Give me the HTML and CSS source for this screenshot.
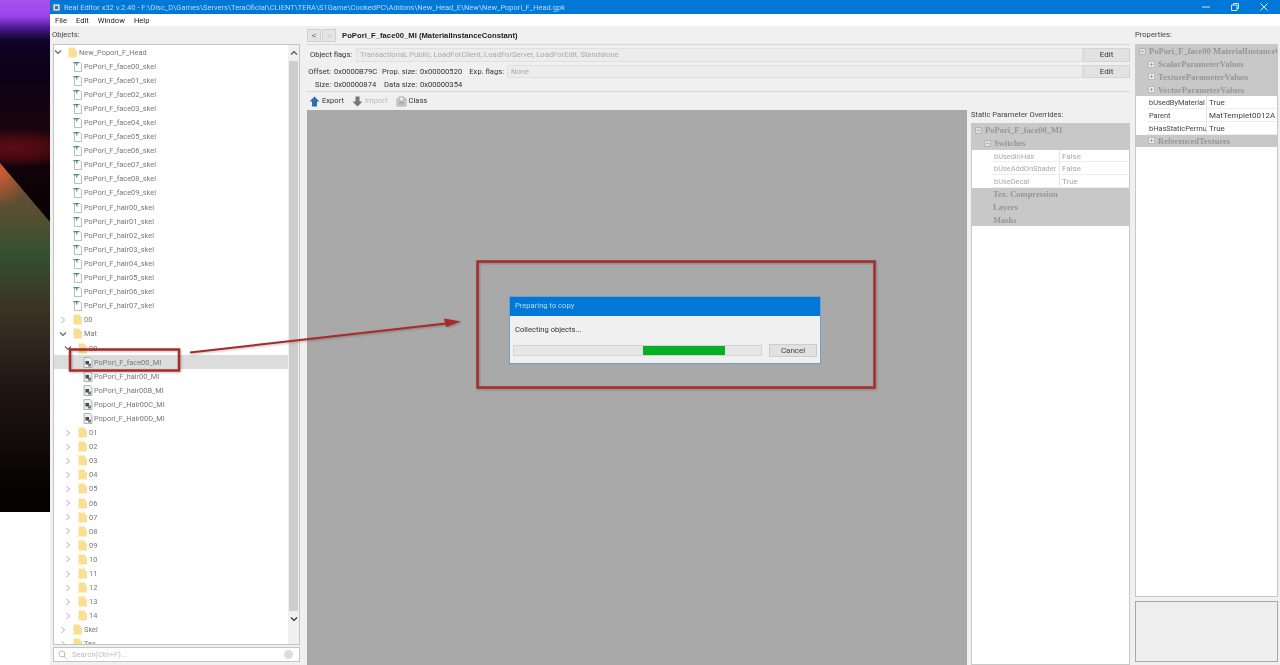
FILE: index.html
```html
<!DOCTYPE html>
<html lang="en">
<head>
    <meta charset="UTF-8">
    <title>Real Editor x32 v.2.40</title>
    <link rel="stylesheet" href="styles.css">
</head>
<body>
    <svg class="defs" aria-hidden="true">
        <symbol id="folder" viewBox="0 0 10 11">
            <path d="M0.500 0.500h6l1 1.500v8.500h-7z" fill="#f9e08f"/>
            <path d="M6.500 3h2.500v7.500h-2z" fill="#f4dfa6"/>
        </symbol>
        <symbol id="skel" viewBox="0 0 10 11">
            <path d="M1.500 1.500h5.500l1.500 1.500v7.500h-7z" fill="#fff" stroke="#9aa5a0" stroke-width="0.700"/>
            <path d="M0.300 1.200h5.500v1h-1.500v2.300h-1v-2.300h-3z" fill="#2c7d5b"/>
        </symbol>
        <symbol id="mat" viewBox="0 0 10 11">
            <path d="M1 0.500h6l2 2v8h-8z" fill="#efefef" stroke="#a0a0a0" stroke-width="0.800"/>
            <path d="M2.500 4h3.500v3.500h-3.500z" fill="#4a4a4a"/>
            <path d="M5 6.500h3v3h-3z" fill="#5f8a70"/>
        </symbol>
        <symbol id="open" viewBox="0 0 8 8">
            <path d="M1 2.500l3 3 3-3" fill="none" stroke="#666" stroke-width="1.200"/>
        </symbol>
        <symbol id="closed" viewBox="0 0 8 8">
            <path d="M2.500 1l3 3-3 3" fill="none" stroke="#aaa" stroke-width="1"/>
        </symbol>
        <symbol id="plus" viewBox="0 0 7 7">
            <path d="M0.500 0.500h6v6h-6z" fill="#eee" stroke="#aaa" stroke-width="0.700"/>
            <path d="M2 3.500h3M3.500 2v3" stroke="#888" stroke-width="0.700"/>
        </symbol>
        <symbol id="minus" viewBox="0 0 7 7">
            <path d="M0.500 0.500h6v6h-6z" fill="#ddd" stroke="#aaa" stroke-width="0.700"/>
            <path d="M2 3.500h3" stroke="#999" stroke-width="0.700"/>
        </symbol>
    </svg>

    <div class="wallpaper"></div>

    <div class="window">
        <div class="titlebar">
            <svg class="app-icon" viewBox="0 0 9 9"><path d="M1 1h7v7h-7z" fill="#cfe4f2" stroke="#5f7f94"/><path d="M3 3h3v3h-3z" fill="#4a6a80"/></svg>
            <span class="title-text">Real Editor x32 v.2.40 - F:\Disc_D\Games\Servers\TeraOficial\CLIENT\TERA\S1Game\CookedPC\Addons\New_Head_E\New\New_Popori_F_Head.gpk</span>
            <div class="win-controls">
                <svg viewBox="0 0 10 10"><path d="M1 5h8" stroke="#cfe6f7"/></svg>
                <svg viewBox="0 0 10 10"><path d="M1.500 3h5.500v5.500h-5.500zM3.500 3v-1.500h5v5h-1.500" fill="none" stroke="#cfe6f7"/></svg>
                <svg viewBox="0 0 10 10"><path d="M1.500 1.500l7 7M8.500 1.500l-7 7" stroke="#e4f1fb"/></svg>
            </div>
        </div>
        <div class="menubar">
            <span>File</span><span>Edit</span><span>Window</span><span>Help</span>
        </div>

        <div class="panes">
            <div class="objects-pane">
                <div class="pane-label">Objects:</div>
                <div class="tree-box">
                    <div class="tree">
                        <div class="row lvl0"><svg class="chev"><use href="#open"/></svg><svg class="ico"><use href="#folder"/></svg><span>New_Popori_F_Head</span></div>
                        <div class="row lvl1"><i class="chev"></i><svg class="ico"><use href="#skel"/></svg><span>PoPori_F_face00_skel</span></div>
                        <div class="row lvl1"><i class="chev"></i><svg class="ico"><use href="#skel"/></svg><span>PoPori_F_face01_skel</span></div>
                        <div class="row lvl1"><i class="chev"></i><svg class="ico"><use href="#skel"/></svg><span>PoPori_F_face02_skel</span></div>
                        <div class="row lvl1"><i class="chev"></i><svg class="ico"><use href="#skel"/></svg><span>PoPori_F_face03_skel</span></div>
                        <div class="row lvl1"><i class="chev"></i><svg class="ico"><use href="#skel"/></svg><span>PoPori_F_face04_skel</span></div>
                        <div class="row lvl1"><i class="chev"></i><svg class="ico"><use href="#skel"/></svg><span>PoPori_F_face05_skel</span></div>
                        <div class="row lvl1"><i class="chev"></i><svg class="ico"><use href="#skel"/></svg><span>PoPori_F_face06_skel</span></div>
                        <div class="row lvl1"><i class="chev"></i><svg class="ico"><use href="#skel"/></svg><span>PoPori_F_face07_skel</span></div>
                        <div class="row lvl1"><i class="chev"></i><svg class="ico"><use href="#skel"/></svg><span>PoPori_F_face08_skel</span></div>
                        <div class="row lvl1"><i class="chev"></i><svg class="ico"><use href="#skel"/></svg><span>PoPori_F_face09_skel</span></div>
                        <div class="row lvl1"><i class="chev"></i><svg class="ico"><use href="#skel"/></svg><span>PoPori_F_hair00_skel</span></div>
                        <div class="row lvl1"><i class="chev"></i><svg class="ico"><use href="#skel"/></svg><span>PoPori_F_hair01_skel</span></div>
                        <div class="row lvl1"><i class="chev"></i><svg class="ico"><use href="#skel"/></svg><span>PoPori_F_hair02_skel</span></div>
                        <div class="row lvl1"><i class="chev"></i><svg class="ico"><use href="#skel"/></svg><span>PoPori_F_hair03_skel</span></div>
                        <div class="row lvl1"><i class="chev"></i><svg class="ico"><use href="#skel"/></svg><span>PoPori_F_hair04_skel</span></div>
                        <div class="row lvl1"><i class="chev"></i><svg class="ico"><use href="#skel"/></svg><span>PoPori_F_hair05_skel</span></div>
                        <div class="row lvl1"><i class="chev"></i><svg class="ico"><use href="#skel"/></svg><span>PoPori_F_hair06_skel</span></div>
                        <div class="row lvl1"><i class="chev"></i><svg class="ico"><use href="#skel"/></svg><span>PoPori_F_hair07_skel</span></div>
                        <div class="row lvl1"><svg class="chev"><use href="#closed"/></svg><svg class="ico"><use href="#folder"/></svg><span>00</span></div>
                        <div class="row lvl1"><svg class="chev"><use href="#open"/></svg><svg class="ico"><use href="#folder"/></svg><span>Mat</span></div>
                        <div class="row lvl2"><svg class="chev"><use href="#open"/></svg><svg class="ico"><use href="#folder"/></svg><span>00</span></div>
                        <div class="row lvl3 selected"><i class="chev"></i><svg class="ico"><use href="#mat"/></svg><span>PoPori_F_face00_MI</span></div>
                        <div class="row lvl3"><i class="chev"></i><svg class="ico"><use href="#mat"/></svg><span>PoPori_F_hair00_MI</span></div>
                        <div class="row lvl3"><i class="chev"></i><svg class="ico"><use href="#mat"/></svg><span>PoPori_F_hair00B_MI</span></div>
                        <div class="row lvl3"><i class="chev"></i><svg class="ico"><use href="#mat"/></svg><span>Popori_F_Hair00C_MI</span></div>
                        <div class="row lvl3"><i class="chev"></i><svg class="ico"><use href="#mat"/></svg><span>Popori_F_Hair00D_MI</span></div>
                        <div class="row lvl2"><svg class="chev"><use href="#closed"/></svg><svg class="ico"><use href="#folder"/></svg><span>01</span></div>
                        <div class="row lvl2"><svg class="chev"><use href="#closed"/></svg><svg class="ico"><use href="#folder"/></svg><span>02</span></div>
                        <div class="row lvl2"><svg class="chev"><use href="#closed"/></svg><svg class="ico"><use href="#folder"/></svg><span>03</span></div>
                        <div class="row lvl2"><svg class="chev"><use href="#closed"/></svg><svg class="ico"><use href="#folder"/></svg><span>04</span></div>
                        <div class="row lvl2"><svg class="chev"><use href="#closed"/></svg><svg class="ico"><use href="#folder"/></svg><span>05</span></div>
                        <div class="row lvl2"><svg class="chev"><use href="#closed"/></svg><svg class="ico"><use href="#folder"/></svg><span>06</span></div>
                        <div class="row lvl2"><svg class="chev"><use href="#closed"/></svg><svg class="ico"><use href="#folder"/></svg><span>07</span></div>
                        <div class="row lvl2"><svg class="chev"><use href="#closed"/></svg><svg class="ico"><use href="#folder"/></svg><span>08</span></div>
                        <div class="row lvl2"><svg class="chev"><use href="#closed"/></svg><svg class="ico"><use href="#folder"/></svg><span>09</span></div>
                        <div class="row lvl2"><svg class="chev"><use href="#closed"/></svg><svg class="ico"><use href="#folder"/></svg><span>10</span></div>
                        <div class="row lvl2"><svg class="chev"><use href="#closed"/></svg><svg class="ico"><use href="#folder"/></svg><span>11</span></div>
                        <div class="row lvl2"><svg class="chev"><use href="#closed"/></svg><svg class="ico"><use href="#folder"/></svg><span>12</span></div>
                        <div class="row lvl2"><svg class="chev"><use href="#closed"/></svg><svg class="ico"><use href="#folder"/></svg><span>13</span></div>
                        <div class="row lvl2"><svg class="chev"><use href="#closed"/></svg><svg class="ico"><use href="#folder"/></svg><span>14</span></div>
                        <div class="row lvl1"><svg class="chev"><use href="#closed"/></svg><svg class="ico"><use href="#folder"/></svg><span>Skel</span></div>
                        <div class="row lvl1"><svg class="chev"><use href="#closed"/></svg><svg class="ico"><use href="#folder"/></svg><span>Tex</span></div>
                    </div>
                    <div class="scrollbar">
                        <svg class="scroll-arrow" viewBox="0 0 8 8"><path d="M1 5.500l3-3 3 3" fill="none" stroke="#555" stroke-width="1.200"/></svg>
                        <div class="scroll-thumb"></div>
                        <svg class="scroll-arrow" viewBox="0 0 8 8"><path d="M1 2.500l3 3 3-3" fill="none" stroke="#333" stroke-width="1.200"/></svg>
                    </div>
                </div>
                <div class="search">
                    <svg class="search-icon" viewBox="0 0 9 9"><circle cx="4" cy="4" r="3" fill="none" stroke="#bbb"/><path d="M6 6l2.500 2.500" stroke="#bbb"/></svg>
                    <span>Search(Ctrl+F)...</span>
                    <i class="search-clear"></i>
                </div>
            </div>

            <div class="center-pane">
                <div class="nav">
                    <button class="nav-btn">&lt;</button>
                    <button class="nav-btn off">&gt;</button>
                    <span class="object-name">PoPori_F_face00_MI (MaterialInstanceConstant)</span>
                </div>
                <div class="info">
                    <div class="flags-row">
                        <span class="flags-label">Object flags:</span>
                        <div class="field">Transactional, Public, LoadForClient, LoadForServer, LoadForEdit, Standalone</div>
                        <button class="edit-btn">Edit</button>
                    </div>
                    <div class="info-grid">
                        <span class="lab">Offset:</span><span>0x0000B79C</span>
                        <span class="lab">Prop. size:</span><span>0x00000520</span>
                        <span class="lab">Exp. flags:</span>
                        <div class="field">None</div>
                        <button class="edit-btn">Edit</button>
                        <span class="lab">Size:</span><span>0x00000874</span>
                        <span class="lab">Data size:</span><span>0x00000354</span>
                    </div>
                </div>
                <div class="toolbar">
                    <div class="tool">
                        <svg viewBox="0 0 11 11"><path d="M5.500 0.500l5 5h-2.500v5h-5v-5h-2.500z" fill="#2a6fb4"/></svg>
                        <span>Export</span>
                    </div>
                    <div class="tool off">
                        <svg viewBox="0 0 11 11"><path d="M3.500 0.500h4v5h3l-5 5-5-5h3z" fill="#777"/></svg>
                        <span>Import</span>
                    </div>
                    <div class="tool">
                        <svg viewBox="0 0 11 11"><path d="M1 3h9v7h-9z" fill="#ddd" stroke="#aaa"/><path d="M3 1h5v4h-5z" fill="#eee" stroke="#aaa"/><path d="M2.500 6.500h6M2.500 8h6" stroke="#999"/></svg>
                        <span>Class</span>
                    </div>
                </div>
                <div class="content">
                    <div class="viewport"></div>
                    <div class="params">
                        <div class="params-label">Static Parameter Overrides:</div>
                        <div class="prop-box">
                            <div class="head"><svg class="box-ico"><use href="#minus"/></svg><span>PoPori_F_face00_MI</span></div>
                            <div class="head sub"><svg class="box-ico"><use href="#minus"/></svg><span>Switches</span></div>
                            <div class="cells faded"><span>bUsedInHair</span><span>False</span></div>
                            <div class="cells faded"><span>bUseAddOnShader</span><span>False</span></div>
                            <div class="cells faded"><span>bUseDecal</span><span>True</span></div>
                            <div class="head plain"><span>Tex. Compression</span></div>
                            <div class="head plain"><span>Layers</span></div>
                            <div class="head plain"><span>Masks</span></div>
                        </div>
                    </div>
                </div>
            </div>

            <div class="props-pane">
                <div class="pane-label">Properties:</div>
                <div class="prop-box props-main">
                    <div class="head"><svg class="box-ico"><use href="#minus"/></svg><span>PoPori_F_face00 MaterialInstanceConstant</span></div>
                    <div class="head sub"><svg class="box-ico"><use href="#plus"/></svg><span>ScalarParameterValues</span></div>
                    <div class="head sub"><svg class="box-ico"><use href="#plus"/></svg><span>TextureParameterValues</span></div>
                    <div class="head sub"><svg class="box-ico"><use href="#plus"/></svg><span>VectorParameterValues</span></div>
                    <div class="cells"><span>bUsedByMaterial</span><span>True</span></div>
                    <div class="cells"><span>Parent</span><span>MatTemplet0012A</span></div>
                    <div class="cells"><span>bHasStaticPermu</span><span>True</span></div>
                    <div class="head sub"><svg class="box-ico"><use href="#plus"/></svg><span>ReferencedTextures</span></div>
                </div>
                <div class="preview"></div>
            </div>
        </div>
    </div>

    <!-- progress dialog floats over the viewport -->
    <div class="dialog">
        <div class="dialog-title">Preparing to copy</div>
        <div class="dialog-body">
            <div class="dialog-msg">Collecting objects...</div>
            <div class="dialog-actions">
                <div class="progress"><div class="progress-fill"></div></div>
                <button class="cancel-btn">Cancel</button>
            </div>
        </div>
    </div>

    <!-- red annotations drawn on top of the screenshot -->
    <svg class="annotations" viewBox="0 0 1280 665">
        <rect x="70" y="349.500" width="109" height="21" fill="none" stroke="#a92a2a" stroke-width="2.500"/>
        <rect x="477.500" y="261.500" width="397" height="126" fill="none" stroke="#a92a2a" stroke-width="2.500"/>
        <path d="M190 352.500L446 323.500" stroke="#a92a2a" stroke-width="2"/>
        <path d="M461 321.500L444 318.500L446 327z" fill="#a92a2a"/>
    </svg>
</body>
</html>
```

FILE: styles.css
```css
* {
    box-sizing: border-box;
}

html, body {
    height: 100%;
}

body {
    margin: 0;
    display: flex;
    overflow: hidden;
    background: #fff;
    font-family: Roboto, "Liberation Sans", sans-serif;
    font-size: 7.6px;
    color: #333;
}

.defs {
    display: none;
}

/* desktop picture peeking out on the left */
.wallpaper {
    position: relative;
    flex: 0 0 50px;
    height: 512px;
    overflow: hidden;
    background:
        radial-gradient(ellipse 70px 20px at 15px 148px, #5c0c18 0%, #44080f 55%, transparent 100%),
        linear-gradient(#a552ee 0, #9a45ec 16px, #4a1a90 28px, #10042a 40px, #0c0118 70px, #180410 115px, #0a0205 200px);
}

.wallpaper::after {
    content: "";
    position: absolute;
    inset: 0;
    clip-path: polygon(0 163px, 50px 222px, 50px 512px, 0 512px);
    background:
        radial-gradient(ellipse 30px 36px at 0 172px, rgba(232, 96, 52, 0.8), transparent 100%),
        linear-gradient(#6e4c36 170px, #564f32 215px, #33502f 255px, #3a3224 310px, #1f1512 390px, #050302 490px);
}

.window {
    flex: 1;
    display: flex;
    flex-direction: column;
    min-width: 0;
    background: #f0f0f0;
    filter: blur(0.35px);
}

.titlebar {
    flex: 0 0 14px;
    display: flex;
    align-items: center;
    padding-left: 2px;
    background: #0078d7;
    color: #b8dcf6;
}

.app-icon {
    width: 9px;
    height: 9px;
    margin-right: 3px;
}

.title-text {
    flex: 1;
    font-size: 7.5px;
    white-space: nowrap;
}

.win-controls {
    display: flex;
    gap: 19px;
    padding-right: 11px;
}

.win-controls svg {
    width: 10px;
    height: 10px;
}

.menubar {
    flex: 0 0 12px;
    display: flex;
    align-items: center;
    gap: 9px;
    padding-left: 5px;
    background: #fff;
    color: #222;
}

.panes {
    flex: 1;
    display: flex;
    min-height: 0;
}

.pane-label {
    height: 18px;
    line-height: 17px;
    color: #444;
}

/* objects tree */
.objects-pane {
    flex: 0 0 253px;
    display: flex;
    flex-direction: column;
    padding: 0 3px 3px 3px;
}

.objects-pane .pane-label {
    margin-left: -1px;
}

.tree-box {
    flex: 1;
    display: flex;
    min-height: 0;
    border: 1px solid #c4c4c4;
    background: #fff;
}

.tree {
    flex: 1;
    min-width: 0;
    overflow: hidden;
}

.row {
    display: flex;
    align-items: center;
    height: 14.1px;
    font-size: 7.4px;
    white-space: nowrap;
    color: #777;
}

.row.selected {
    background: #dcdcdc;
}

.lvl0 { padding-left: 0; }
.lvl1 { padding-left: 5px; }
.lvl2 { padding-left: 10px; }
.lvl3 { padding-left: 15px; }

.chev {
    flex: 0 0 13px;
    width: 13px;
    height: 8px;
    padding-right: 5px;
}

.ico {
    flex: 0 0 12px;
    width: 10px;
    height: 11px;
}

.scrollbar {
    flex: 0 0 11px;
    display: flex;
    flex-direction: column;
    align-items: center;
    background: #f0f0f0;
}

.scroll-arrow {
    flex: 0 0 12px;
    width: 8px;
    height: 8px;
    margin: 2px 0;
}

.scroll-thumb {
    width: 9px;
    height: 550px;
    background: #cdcdcd;
}

.search {
    flex: 0 0 15px;
    display: flex;
    align-items: center;
    gap: 5px;
    margin-top: 2px;
    padding: 0 6px 0 4px;
    border: 1px solid #c4c4c4;
    background: #fff;
    color: #bbb;
}

.search-icon {
    width: 9px;
    height: 9px;
}

.search span {
    flex: 1;
}

.search-clear {
    width: 9px;
    height: 9px;
    border-radius: 50%;
    background: #ddd;
}

/* centre column */
.center-pane {
    flex: 0 0 828px;
    display: flex;
    flex-direction: column;
    min-width: 0;
    padding-left: 4px;
}

.nav {
    flex: 0 0 18px;
    display: flex;
    align-items: center;
    gap: 1px;
}

.nav-btn {
    width: 14px;
    height: 13px;
    padding: 0;
    border: 1px solid #d0d0d0;
    background: #e4e4e4;
    font: 8px "Liberation Sans", sans-serif;
    color: #555;
}

.nav-btn.off {
    color: #bbb;
}

.object-name {
    margin-left: 5px;
    font-family: "Liberation Sans", sans-serif;
    font-size: 7.7px;
    font-weight: bold;
    color: #222;
}

.info {
    flex: 0 0 48px;
    margin-right: 1px;
    padding-top: 2px;
    border-top: 1px solid #d8d8d8;
    border-bottom: 1px solid #d8d8d8;
}

.flags-row {
    display: flex;
    align-items: center;
    height: 15px;
}

.flags-label {
    flex: 0 0 49px;
    padding-left: 3px;
}

.field {
    flex: 1;
    height: 14px;
    line-height: 12px;
    padding-left: 3px;
    border: 1px solid #e0e0e0;
    background: #ececec;
    color: #aaa;
}

.edit-btn {
    flex: 0 0 47px;
    height: 14px;
    padding: 0;
    border: 1px solid #d4d4d4;
    background: #e2e2e2;
    font: 8px Roboto, sans-serif;
    color: #333;
}

.info-grid {
    display: grid;
    grid-template-columns: 27px 46px 40px 48px 39px 1fr 47px;
    grid-auto-rows: 13px;
    align-items: center;
    margin-top: 3px;
    white-space: nowrap;
}

.lab {
    text-align: right;
    padding-right: 3px;
}

.info-grid .field {
    height: 13px;
}

.info-grid .edit-btn {
    height: 13px;
}

.toolbar {
    flex: 0 0 18px;
    display: flex;
    align-items: center;
    gap: 8px;
    padding-left: 2px;
}

.tool {
    display: flex;
    align-items: center;
    gap: 2px;
}

.tool span {
    margin-top: -1px;
}

.tool svg {
    width: 11px;
    height: 11px;
}

.tool.off {
    color: #bbb;
}

.content {
    flex: 1;
    display: flex;
    min-height: 0;
    gap: 4px;
}

.viewport {
    flex: 0 0 660px;
    background: #a9a9a9;
}

.params {
    flex: 1;
    display: flex;
    flex-direction: column;
    padding-right: 1px;
}

.params-label {
    flex: 0 0 13px;
    line-height: 10px;
    color: #444;
}

/* property grids */
.prop-box {
    flex: 1;
    border: 1px solid #c8c8c8;
    background: #fff;
    overflow: hidden;
    white-space: nowrap;
}

.head {
    display: flex;
    align-items: center;
    height: 12.8px;
    padding-left: 3px;
    background: #c8c8c8;
    font-family: "Liberation Serif", serif;
    font-weight: bold;
    font-size: 8.5px;
    color: #969696;
}

.box-ico {
    flex: 0 0 7px;
    width: 7px;
    height: 7px;
    margin-right: 3px;
}

.head.sub {
    padding-left: 12px;
}

.head.plain {
    padding-left: 21px;
}

.cells {
    display: grid;
    grid-template-columns: 60px 1fr;
    height: 12.8px;
    margin-left: 11px;
    line-height: 14px;
    font-size: 8px;
    background: #fff;
    border-bottom: 1px solid #eee;
    color: #444;
}

.cells span {
    padding-left: 2px;
    overflow: hidden;
}

.cells span:first-child {
    border-right: 1px solid #e4e4e4;
    font-size: 7.4px;
}

.params .cells {
    margin-left: 20px;
    grid-template-columns: 68px 1fr;
}

.cells.faded {
    color: #a8a8a8;
}

.props-pane {
    flex: 1;
    display: flex;
    flex-direction: column;
    min-width: 0;
    padding: 0 2px 3px 4px;
}

.props-main {
    flex: 1;
}

.preview {
    flex: 0 0 61px;
    margin-top: 4px;
    border: 1px solid #a8a8a8;
    background: #eee;
}

/* progress dialog */
.dialog {
    position: absolute;
    left: 509px;
    top: 296px;
    width: 312px;
    height: 68px;
    display: flex;
    flex-direction: column;
    border: 1px solid #6f9fd0;
    background: #f0f0f0;
    filter: blur(0.35px);
}

.dialog-title {
    flex: 0 0 19px;
    line-height: 17px;
    padding-left: 5px;
    background: #0078d7;
    color: #b8dcf6;
}

.dialog-body {
    flex: 1;
    padding: 9px 3px 0 5px;
}

.dialog-msg {
    height: 19px;
    color: #333;
}

.dialog-actions {
    display: flex;
    align-items: center;
    gap: 7px;
}

.progress {
    width: 250px;
    height: 11px;
    margin-left: -2px;
    border: 1px solid #d4d4d4;
    background: #e6e6e6;
}

.progress-fill {
    width: 82px;
    height: 9px;
    margin-left: 129px;
    background: #06b025;
}

.cancel-btn {
    width: 48px;
    height: 13px;
    padding: 0;
    border: 1px solid #ccc;
    background: #e1e1e1;
    font: 8px Roboto, sans-serif;
    color: #444;
}

.annotations {
    position: absolute;
    left: 0;
    top: 0;
    width: 1280px;
    height: 665px;
    pointer-events: none;
    filter: drop-shadow(1px 1px 1px rgba(0, 0, 0, 0.25));
}
```
